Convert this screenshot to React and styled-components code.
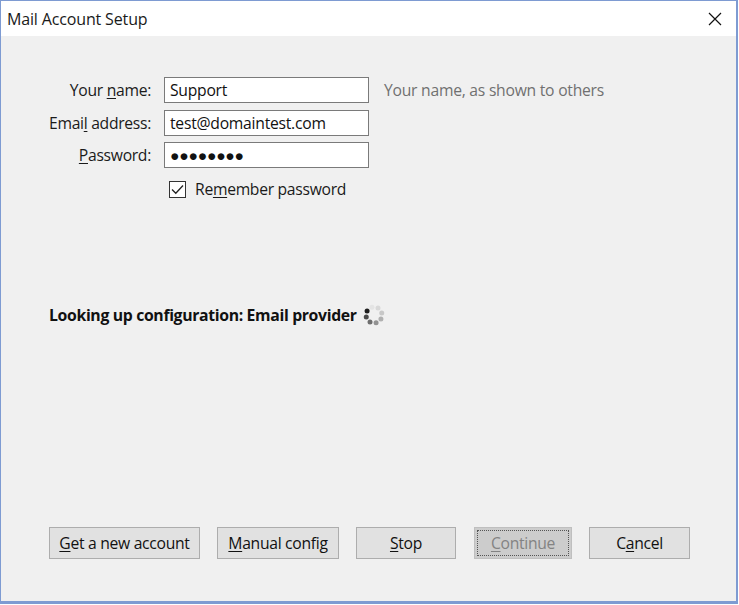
import React from "react";
import styled, { createGlobalStyle } from "styled-components";

const Global = createGlobalStyle`
  html, body { margin: 0; padding: 0; background: #ffffff; }
  body { font-family: "Open Sans", "Noto Sans", sans-serif; }
  * { box-sizing: border-box; }
`;

const Frame = styled.div`
  width: 738px;
  height: 604px;
  border: 1px solid #7e9bd2;
  border-right-width: 2px;
  border-bottom-width: 3px;
  display: flex;
  flex-direction: column;
  background: #f0f0f0;
`;

const TitleBar = styled.div`
  height: 35px;
  background: #ffffff;
  display: flex;
  align-items: center;
  justify-content: space-between;
  padding: 0 12px 0 6px;
  flex-shrink: 0;
`;

const Title = styled.div`
  font-size: 16px;
  color: #1a1a1a;
  letter-spacing: -0.15px;
`;

const CloseBtn = styled.div`
  width: 18px;
  height: 18px;
  display: flex;
  align-items: center;
  justify-content: center;
`;

const Body = styled.div`
  flex: 1;
  display: flex;
  flex-direction: column;
  padding: 41px 0 42px 39px;
`;

const FormGrid = styled.div`
  display: grid;
  grid-template-columns: 111px 205px auto;
  column-gap: 13px;
  row-gap: 6.5px;
  align-items: center;
`;

const Label = styled.label`
  text-align: right;
  font-size: 15.7px;
  color: #1a1a1a;
  letter-spacing: -0.3px;
  white-space: nowrap;
`;

const Input = styled.div`
  height: 26px;
  background: #ffffff;
  border: 1px solid #7a7a7a;
  display: flex;
  align-items: center;
  padding-left: 5px;
  font-size: 15.7px;
  color: #111;
  letter-spacing: -0.25px;
  font-weight: ${(p) => (p.$dots ? 700 : 400)};
`;

const Hint = styled.span`
  font-size: 15.7px;
  color: #707070;
  letter-spacing: -0.25px;
  margin-left: 2px;
  white-space: nowrap;
`;

const CheckRow = styled.div`
  grid-column: 2 / 4;
  display: flex;
  align-items: center;
  gap: 9px;
  padding-left: 5px;
  margin-top: 3.5px;
  font-size: 15.7px;
  color: #1a1a1a;
  letter-spacing: -0.3px;
`;

const Box = styled.div`
  width: 17px;
  height: 17px;
  border: 1px solid #333;
  background: #ffffff;
  display: flex;
  align-items: center;
  justify-content: center;
`;

const Status = styled.div`
  margin-top: 104px;
  margin-left: 9px;
  display: flex;
  align-items: center;
  gap: 6px;
  font-size: 15.8px;
  font-weight: 700;
  color: #111;
  letter-spacing: -0.35px;
`;

const Buttons = styled.div`
  margin-top: auto;
  margin-left: 9px;
  display: flex;
  gap: 17px;
`;

const Button = styled.div`
  width: ${(p) => p.$w}px;
  height: 32px;
  margin-left: ${(p) => p.$extra || 0}px;
  background: ${(p) => (p.$disabled ? "#cccccc" : "#e1e1e1")};
  border: 1px solid ${(p) => (p.$disabled ? "#bfbfbf" : "#adadad")};
  color: ${(p) => (p.$disabled ? "#838383" : "#111")};
  font-size: 15.7px;
  letter-spacing: -0.3px;
  display: flex;
  align-items: center;
  justify-content: center;
  position: relative;
  ${(p) =>
    p.$focus &&
    `&::after { content: ""; position: absolute; inset: 2px; border: 1px dotted #555; }`}
`;

const U = styled.span`
  text-decoration: underline;
  text-underline-offset: 2px;
`;

const Spinner = () => {
  const dots = [];
  const shades = ["#1e1e1e", "#4a4a4a", "#6e6e6e", "#929292", "#b0b0b0", "#c8c8c8", "#d8d8d8", "#e4e4e4"];
  for (let i = 0; i < 8; i++) {
    const a = (-150 + i * 45) * (Math.PI / 180);
    dots.push(
      <circle
        key={i}
        cx={11 + Math.cos(a) * 8}
        cy={11 + Math.sin(a) * 8}
        r={2.5}
        fill={shades[(8 - i) % 8]}
      />
    );
  }
  return (
    <svg width="22" height="22" viewBox="0 0 22 22">
      {dots}
    </svg>
  );
};

export default function App() {
  return (
    <>
      <Global />
      <Frame>
        <TitleBar>
          <Title>Mail Account Setup</Title>
          <CloseBtn>
            <svg width="14" height="14" viewBox="0 0 14 14">
              <path d="M1 1L13 13M13 1L1 13" stroke="#111" strokeWidth="1.2" />
            </svg>
          </CloseBtn>
        </TitleBar>
        <Body>
          <FormGrid>
            <Label>
              Your <U>n</U>ame:
            </Label>
            <Input>Support</Input>
            <Hint>Your name, as shown to others</Hint>

            <Label>
              Emai<U>l</U> address:
            </Label>
            <Input>test@domaintest.com</Input>
            <span />

            <Label>
              <U>P</U>assword:
            </Label>
            <Input $dots>●●●●●●●●</Input>
            <span />

            <CheckRow>
              <Box>
                <svg width="13" height="11" viewBox="0 0 13 11">
                  <path d="M1 5.5L4.8 9.3L12 1.5" fill="none" stroke="#222" strokeWidth="1.3" />
                </svg>
              </Box>
              <span>
                Re<U>m</U>ember password
              </span>
            </CheckRow>
          </FormGrid>

          <Status>
            <span>Looking up configuration: Email provider</span>
            <Spinner />
          </Status>

          <Buttons>
            <Button $w={151}>
              <span>
                <U>G</U>et a new account
              </span>
            </Button>
            <Button $w={122}>
              <span>
                <U>M</U>anual config
              </span>
            </Button>
            <Button $w={100}>
              <span>
                <U>S</U>top
              </span>
            </Button>
            <Button $w={98} $extra={1} $disabled $focus>
              <span>
                <U>C</U>ontinue
              </span>
            </Button>
            <Button $w={101}>
              <span>
                C<U>a</U>ncel
              </span>
            </Button>
          </Buttons>
        </Body>
      </Frame>
    </>
  );
}
